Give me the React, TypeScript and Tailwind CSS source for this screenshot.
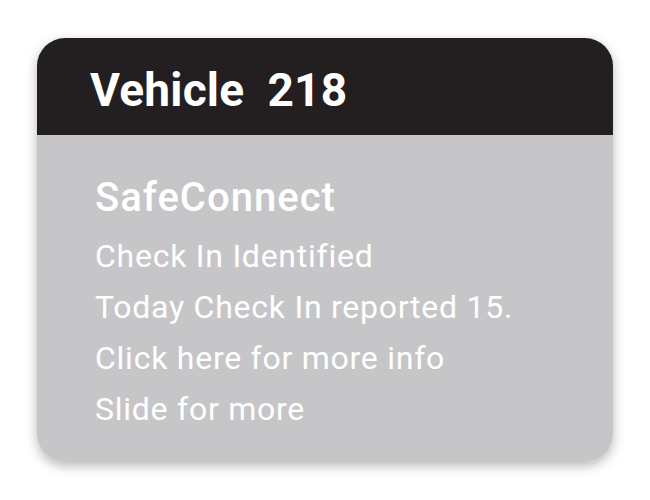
import React from "react";

const lines = [
  "Check In Identified",
  "Today Check In reported 15.",
  "Click here for more info",
  "Slide for more",
];

export const VehicleCard: React.FC<{ vehicle: string; title: string }> = ({
  vehicle,
  title,
}) => {
  return (
    <div className="w-[576px] rounded-[28px] overflow-hidden shadow-[0_4px_12px_rgba(0,0,0,0.28)] font-['Roboto',sans-serif]">
      <div className="h-[97px] bg-[#231f20] pl-[53px] pt-[29px]">
        <h2 className="text-[46px] leading-none font-bold tracking-[0.2px] text-white whitespace-pre">
          {vehicle}
        </h2>
      </div>
      <div className="bg-[#c6c6c8] pl-[58px] pt-[43px] pb-[27px] text-white">
        <h3 className="text-[40px] leading-none font-medium tracking-[1px] mb-[13px]">
          {title}
        </h3>
        {lines.map((line) => (
          <p key={line} className="text-[32px] leading-[51px] tracking-[0.75px]">
            {line}
          </p>
        ))}
      </div>
    </div>
  );
};

export default function App() {
  return (
    <div className="w-[650px] h-[500px] bg-white pl-[37px] pt-[38px]">
      <VehicleCard vehicle="Vehicle  218" title="SafeConnect" />
    </div>
  );
}
